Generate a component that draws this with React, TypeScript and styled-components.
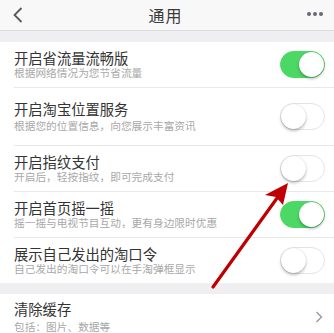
import React from "react";
import styled, { createGlobalStyle } from "styled-components";

const GlobalStyle = createGlobalStyle`
  html, body {
    margin: 0;
    padding: 0;
    background: #ffffff;
  }
  body {
    font-family: "Noto Sans CJK SC", "Noto Sans", sans-serif;
    -webkit-font-smoothing: antialiased;
  }
`;

const Page = styled.div`
  position: relative;
  width: 334px;
  height: 333px;
  overflow: hidden;
  background: #efeff1;
`;

const NavBar = styled.div`
  height: 30px;
  display: flex;
  align-items: center;
  justify-content: space-between;
  padding: 0 11px 0 12px;
  background: #f8f8f8;
  border-bottom: 1px solid #dcdcdc;
`;

const NavTitle = styled.div`
  font-size: 16px;
  color: #3a3a3a;
  letter-spacing: 1px;
  margin-top: -1px;
`;

const Dots = styled.div`
  display: flex;
  gap: 2px;
  width: 16px;
  margin-top: -3px;

  span {
    width: 4px;
    height: 4px;
    border-radius: 50%;
    background: #666a70;
  }
`;

const Group = styled.div`
  background: #ffffff;
  margin-top: 11px;
`;

const Row = styled.div<{ $h: number; $last?: boolean }>`
  height: ${(p) => p.$h}px;
  margin-left: 14px;
  padding-right: 9px;
  display: flex;
  align-items: center;
  justify-content: space-between;
  box-sizing: border-box;
  border-bottom: ${(p) => (p.$last ? "none" : "1px solid #e8e8e8")};
`;

const Texts = styled.div<{ $gap?: number }>`
  display: flex;
  flex-direction: column;
  gap: ${(p) => p.$gap ?? 0}px;
`;

const Title = styled.div`
  font-size: 14.3px;
  line-height: 16px;
  color: #333333;
`;

const Sub = styled.div`
  font-size: 10.7px;
  line-height: 13px;
  color: #a8a8a8;
`;

const Track = styled.div<{ $on: boolean }>`
  position: relative;
  width: 45px;
  height: 27px;
  border-radius: 14px;
  box-sizing: border-box;
  background: ${(p) => (p.$on ? "#4cd864" : "#ffffff")};
  border: 1px solid ${(p) => (p.$on ? "#4cd864" : "#e3e3e3")};
  flex-shrink: 0;
`;

const Knob = styled.div<{ $on: boolean }>`
  position: absolute;
  top: 0;
  left: ${(p) => (p.$on ? "18px" : "0")};
  width: 25px;
  height: 25px;
  border-radius: 50%;
  background: #ffffff;
  box-shadow: 0 2px 3px rgba(0, 0, 0, 0.25), 0 0 1px rgba(0, 0, 0, 0.2);
`;

const Chevron = styled.div`
  margin-right: 2px;
  display: flex;
`;

const Overlay = styled.svg`
  position: absolute;
  top: 0;
  left: 0;
  pointer-events: none;
`;

const Toggle = ({ on }: { on: boolean }) => (
  <Track $on={on}>
    <Knob $on={on} />
  </Track>
);

const settings = [
  { title: "开启省流量流畅版", sub: "根据网络情况为您节省流量", on: true, h: 46 },
  { title: "开启淘宝位置服务", sub: "根据您的位置信息，向您展示丰富资讯", on: false, h: 58, gap: 2 },
  { title: "开启指纹支付", sub: "开启后，轻按指纹，即可完成支付", on: false, h: 46 },
  { title: "开启首页摇一摇", sub: "摇一摇与电视节目互动，更有身边限时优惠", on: true, h: 46 },
  { title: "展示自己发出的淘口令", sub: "自己发出的淘口令可以在手淘弹框显示", on: false, h: 45 },
];

const App = () => {
  return (
    <Page>
      <GlobalStyle />
      <NavBar>
        <svg width="12" height="18" viewBox="0 0 12 18">
          <path d="M9.5 2 L2.5 9 L9.5 16" fill="none" stroke="#555a60" strokeWidth="1.8" />
        </svg>
        <NavTitle>通用</NavTitle>
        <Dots>
          <span />
          <span />
          <span />
        </Dots>
      </NavBar>

      <Group>
        {settings.map((s, i) => (
          <Row key={s.title} $h={s.h} $last={i === settings.length - 1}>
            <Texts $gap={s.gap}>
              <Title>{s.title}</Title>
              <Sub>{s.sub}</Sub>
            </Texts>
            <Toggle on={s.on} />
          </Row>
        ))}
      </Group>

      <Group>
        <Row $h={46} $last>
          <Texts $gap={3}>
            <Title>清除缓存</Title>
            <Sub>包括：图片、数据等</Sub>
          </Texts>
          <Chevron>
            <svg width="8" height="12" viewBox="0 0 8 12">
              <path d="M1.5 1 L6.5 6 L1.5 11" fill="none" stroke="#9a9a9a" strokeWidth="1.4" />
            </svg>
          </Chevron>
        </Row>
      </Group>

      <Overlay width="334" height="333" viewBox="0 0 334 333">
        <line x1="213" y1="287" x2="280" y2="194" stroke="#c00000" strokeWidth="3.2" strokeLinecap="round" />
        <polygon points="288,183 265,195 276,197 283,205" fill="#c00000" />
      </Overlay>
    </Page>
  );
};

export default App;
